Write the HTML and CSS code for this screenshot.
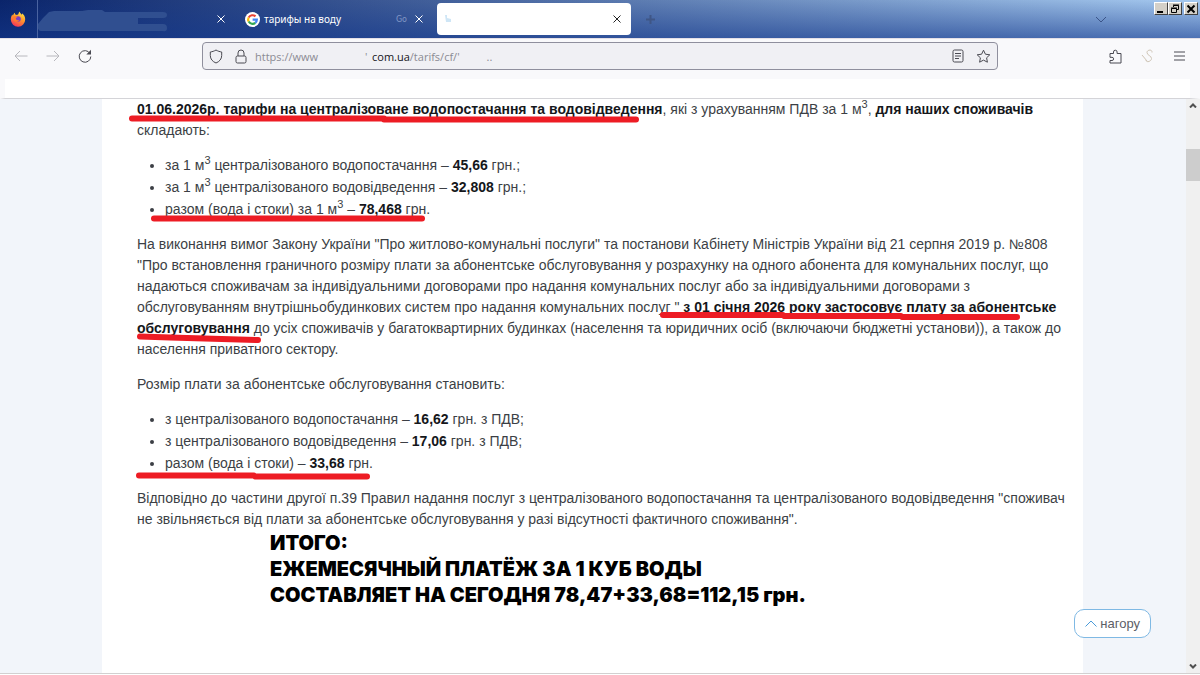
FILE: index.html
```html
<!DOCTYPE html>
<html lang="uk">

<head>
    <meta charset="UTF-8">
    <meta name="viewport" content="width=device-width, initial-scale=1.0">
    <title>Тарифи</title>
    <link rel="stylesheet" href="styles.css">
</head>

<body>
    <header class="tabs">
        <button class="home" aria-label="Firefox">
            <svg width="16" height="16" viewBox="0 0 16 16">
                <defs>
                    <linearGradient id="fox" x1="0.8" y1="0" x2="0.3" y2="1">
                        <stop offset="0" stop-color="#fff04a"/>
                        <stop offset="0.45" stop-color="#ff9a2a"/>
                        <stop offset="1" stop-color="#f5315c"/>
                    </linearGradient>
                </defs>
                <path fill="url(#fox)" d="M9.600.600c.3 1.500 1.300 2.200 2.300 3.100.3-.4.300-1 .1-1.500 2 1.300 3.200 3.600 3.200 6.100A7.200 7.200 0 0 1 .8 8.600c0-2 .6-3.800 1.600-5.200.1.5.3.9.6 1.200C3.300 3.300 4 2.400 4.800 1.800c0 .9.400 1.600 1.200 2.100 1.100-.1 1.800-.2 2.300-.7C8.600 2.300 8.900 1.300 9.600.6z"/>
                <circle cx="8" cy="8" r="2.800" fill="#7b3fc4"/>
                <path fill="#ff7a2d" d="M3.300 5.600c1.600-.8 3.200-.5 4.500.5-1 .2-1.300.8-2 1.200.1 1.600 1.700 2.400 3.600 1.600-.8 1.900-3.500 2.600-5.200.8-.9-1-1.300-2.500-.9-4.100z"/>
            </svg>
        </button>
        <div class="tab first">
            <svg class="smudge" width="130" height="22" viewBox="0 0 130 22">
                <path fill="#304f90" d="M0 14 5 8 11 2l5-1h28l6-1h14l3 2h58q4 0 4 3t-4 3h-25v6h25q4 0 4 4t-4 3H3q-4 0-3-7z"/>
            </svg>
            <button class="close" aria-label="Закрыть вкладку">
                <svg width="8" height="8" viewBox="0 0 8 8"><path d="M.5.5l7 7m0-7l-7 7"/></svg>
            </button>
        </div>
        <div class="tab second">
            <svg width="15" height="15" viewBox="0 0 24 24">
                <circle cx="12" cy="12" r="12" fill="#fff"/>
                <g fill="none" stroke-width="3.400">
                    <path stroke="#ea4335" d="M5.900 8.800A7 7 0 0 1 16.800 7"/>
                    <path stroke="#fbbc05" d="M5.900 15.300a7 7 0 0 1 0-6.600"/>
                    <path stroke="#34a853" d="M16.500 17.400A7 7 0 0 1 5.900 15.200"/>
                    <path stroke="#4285f4" d="M12.200 12.200H19a7 7 0 0 1-2.600 5.300"/>
                </g>
            </svg>
            <span class="title">тарифы на воду</span>
            <span class="faded">Go</span>
            <button class="close" aria-label="Закрыть вкладку">
                <svg width="8" height="8" viewBox="0 0 8 8"><path d="M.5.5l7 7m0-7l-7 7"/></svg>
            </button>
        </div>
        <div class="tab active">
            <svg width="7" height="8" viewBox="0 0 7 8"><path fill="#cfe6f6" d="M0 0h2v3l4 1v3H1z"/></svg>
            <button class="close" aria-label="Закрыть вкладку">
                <svg width="8" height="8" viewBox="0 0 8 8"><path d="M.5.5l7 7m0-7l-7 7"/></svg>
            </button>
        </div>
        <button class="new-tab" aria-label="Новая вкладка">
            <svg width="11" height="11" viewBox="0 0 11 11"><path d="M5.500 1v9M1 5.500h9"/></svg>
        </button>
        <button class="all-tabs" aria-label="Список вкладок">
            <svg width="12" height="7" viewBox="0 0 12 7"><path d="M1 1l5 5 5-5"/></svg>
        </button>
        <div class="window-buttons">
            <button aria-label="Свернуть"><svg width="12" height="10" viewBox="0 0 12 10"><path d="M2 8h6" stroke-width="2"/></svg></button>
            <button aria-label="Восстановить"><svg width="12" height="10" viewBox="0 0 12 10"><path d="M4.500 3V1.500h5v4H8M4 1h6M2.500 4.500h5v4h-5zM2 4h6"/></svg></button>
            <button class="quit" aria-label="Закрыть"><svg width="12" height="10" viewBox="0 0 12 10"><path d="M2.500 1.500l7 7m0-7l-7 7" stroke-width="2"/></svg></button>
        </div>
    </header>

    <nav class="toolbar">
        <div class="history">
            <button class="off" aria-label="Назад"><svg width="14" height="12" viewBox="0 0 14 12"><path d="M13.500 6H1M6 1L1 6l5 5"/></svg></button>
            <button class="off" aria-label="Вперёд"><svg width="14" height="12" viewBox="0 0 14 12"><path d="M.5 6H13M8 1l5 5-5 5"/></svg></button>
            <button aria-label="Обновить"><svg width="14" height="14" viewBox="0 0 14 14"><path d="M12 4.500A5.800 5.800 0 1 0 12.800 7.500"/><path d="M13 .8v4.700H8.300z" fill="#4a4a52" stroke="none"/></svg></button>
        </div>
        <div class="urlbar">
            <svg width="14" height="15" viewBox="0 0 14 15"><path d="M7 1c2 1.200 3.700 1.700 5.700 2v3.500C12.700 10 10.500 12.600 7 14 3.500 12.600 1.300 10 1.300 6.500V3C3.300 2.700 5 2.200 7 1z"/></svg>
            <svg width="12" height="15" viewBox="0 0 12 15"><path d="M3 7V4a3 3 0 0 1 6 0v3M2.500 7h7q1.500 0 1.500 1.500v4q0 1.500-1.500 1.500h-7Q1 14 1 12.500v-4Q1 7 2.500 7z"/></svg>
            <a class="address" href="#"><span class="scheme">https://www</span><span class="tick">'</span><span><b>com.ua</b>/tarifs/cf/'</span><span class="dots">..</span></a>
            <svg width="12" height="14" viewBox="0 0 12 14"><rect x="1" y="1" width="10" height="12" rx="1.500"/><path d="M3 4.500h6M3 7h6M3 9.500h4"/></svg>
            <svg width="15" height="15" viewBox="0 0 15 15"><path d="M7.500 1.200l1.900 4 4.400.6-3.200 3 .8 4.400-3.900-2.100-3.900 2.100.8-4.400-3.200-3 4.400-.6z"/></svg>
        </div>
        <div class="tools">
            <button aria-label="Расширения"><svg width="13" height="15" viewBox="0 0 13 15"><path d="M1 6.500V4.500h3.500V3a1.800 1.800 0 0 1 3.600 0v1.500H12V14H1v-2.500h2a1.500 1.500 0 0 0 0-3.200H1z"/></svg></button>
            <button class="script" aria-label="S"><svg width="12" height="14" viewBox="0 0 12 14"><path d="M11 3.500C11.500 0 6 .5 6 3.500c0 3 4.500 3 4.500 6S5 14 5 11M1 6l5 6"/></svg></button>
            <button aria-label="Меню"><svg width="11" height="10" viewBox="0 0 11 10"><path d="M0 1h11M0 5h11M0 9h11"/></svg></button>
        </div>
    </nav>
    <div class="bookmarks"></div>

    <div class="viewport">
        <main class="page">
            <article class="content">
                <p><b>01.06.2026р. тарифи на централізоване водопостачання та водовідведення</b>, які з урахуванням ПДВ за 1 м<sup>3</sup>, <b>для наших споживачів</b><br>
                    складають:</p>
                <ul>
                    <li>за 1 м<sup>3</sup> централізованого водопостачання – <b>45,66</b> грн.;</li>
                    <li>за 1 м<sup>3</sup> централізованого водовідведення – <b>32,808</b> грн.;</li>
                    <li>разом (вода і стоки) за 1 м<sup>3</sup> – <b>78,468</b> грн.</li>
                </ul>
                <p>На виконання вимог Закону України "Про житлово-комунальні послуги" та постанови Кабінету Міністрів України від 21 серпня 2019 р. №808<br>
                    "Про встановлення граничного розміру плати за абонентське обслуговування у розрахунку на одного абонента для комунальних послуг, що<br>
                    надаються споживачам за індивідуальними договорами про надання комунальних послуг або за індивідуальними договорами з<br>
                    обслуговуванням внутрішньобудинкових систем про надання комунальних послуг " <b>з 01 січня 2026 року застосовує плату за абонентське<br>
                    обслуговування</b> до усіх споживачів у багатоквартирних будинках (населення та юридичних осіб (включаючи бюджетні установи)), а також до<br>
                    населення приватного сектору.</p>
                <p>Розмір плати за абонентське обслуговування становить:</p>
                <ul>
                    <li>з централізованого водопостачання – <b>16,62</b> грн. з ПДВ;</li>
                    <li>з централізованого водовідведення – <b>17,06</b> грн. з ПДВ;</li>
                    <li>разом (вода і стоки) – <b>33,68</b> грн.</li>
                </ul>
                <p class="last">Відповідно до частини другої п.39 Правил надання послуг з централізованого водопостачання та централізованого водовідведення "споживач<br>
                    не звільняється від плати за абонентське обслуговування у разі відсутності фактичного споживання".</p>
                <div class="total" lang="ru">ИТОГО:<br>ЕЖЕМЕСЯЧНЫЙ ПЛАТЁЖ ЗА 1 КУБ ВОДЫ<br>СОСТАВЛЯЕТ НА СЕГОДНЯ 78,47+33,68=112,15 грн.</div>
                <!-- red pen marks over the text -->
                <svg class="marks" width="980" height="400" viewBox="0 0 980 400">
                    <path d="M30 19.500h252v1h252"/>
                    <path d="M52 119.500h268"/>
                    <path d="M561 216h120l1 1h117l1 1h115"/>
                    <path d="M38 237.500l30 1 88 2.500"/>
                    <path d="M37 376.500h115l1 1h112"/>
                </svg>
            </article>
        </main>
        <div class="scrollbar">
            <svg width="8" height="5" viewBox="0 0 8 5"><path d="M1 4.500l3-3 3 3"/></svg>
            <div class="thumb"></div>
            <svg width="8" height="5" viewBox="0 0 8 5"><path d="M1 .5l3 3 3-3"/></svg>
        </div>
        <a class="to-top" href="#">
            <svg width="12" height="7" viewBox="0 0 12 7"><path d="M.5 6.500L6 1l5.500 5.500"/></svg>
            нагору
        </a>
    </div>
</body>

</html>
```
FILE: styles.css
```css
* {
    box-sizing: border-box;
}

body {
    min-height: 100vh;
    display: flex;
    flex-direction: column;
    margin: 0;
    padding-bottom: 1px;
    background: #fff;
    font-family: 'Liberation Sans', Arial, sans-serif;
    font-size: 14px;
    color: #3c3f45;
}

button {
    display: flex;
    align-items: center;
    justify-content: center;
    border: none;
    background: none;
    padding: 0;
    color: inherit;
}

svg {
    display: block;
    flex: none;
    fill: none;
    stroke: currentColor;
}

/* tab strip */

.tabs {
    display: flex;
    height: 38px;
    color: #fff;
    background:
        linear-gradient(to bottom, rgba(20, 56, 140, 0) 0%, rgba(20, 56, 140, 0.6) 100%),
        linear-gradient(to right, #0a246a, #a6caf0);
}

.home {
    width: 38px;
    padding-right: 2px;
    border-right: 1px solid #4a63a0;
}

.home svg,
.second > svg {
    stroke: none;
}

.tab {
    display: flex;
    align-items: center;
    font-family: 'DejaVu Sans', sans-serif;
    font-size: 10px;
}

.smudge {
    margin-top: 4px;
    stroke: none;
}

.close {
    width: 24px;
    height: 24px;
}

.first {
    width: 195px;
    justify-content: space-between;
}

.second {
    width: 198px;
    padding-left: 12px;
}

.title {
    flex: 1;
    padding-left: 4px;
    font-family: 'Noto Sans', sans-serif;
    font-size: 10px;
}

.faded {
    color: #8298c6;
    font-size: 8px;
}

.active {
    width: 194px;
    height: 32px;
    margin: 3px 0 0 6px;
    padding: 0 2px 0 8px;
    justify-content: space-between;
    border-radius: 4px;
    background: #fff;
    color: #222;
}

.active > svg {
    stroke: none;
}

.new-tab {
    width: 38px;
    color: #3f5686;
    stroke-width: 2px;
}

.all-tabs {
    width: 24px;
    margin-left: auto;
    margin-right: 41px;
    color: #3b5488;
}

.window-buttons {
    display: flex;
    padding: 2px 2px 0 0;
}

.window-buttons button {
    width: 14px;
    height: 13px;
    background: #d4d0c8;
    color: #000;
    border: 1px solid;
    border-color: #fff #404040 #404040 #fff;
}

.window-buttons .quit {
    margin-left: 2px;
}

/* toolbar */

.toolbar {
    display: flex;
    align-items: center;
    height: 41px;
    padding-bottom: 6px;
    background: #f9f9fb;
    border-top: 1px solid #e4dfe6;
    color: #4a4a52;
}

.history {
    display: flex;
    width: 202px;
    padding-left: 5px;
}

.history button,
.tools button {
    width: 32px;
    height: 32px;
}

.history .off {
    color: #b8b8bd;
}

.urlbar {
    flex: 1;
    display: flex;
    align-items: center;
    gap: 12px;
    height: 28px;
    padding: 0 6px;
    background: #f0f0f4;
    border: 1px solid #8f8f9d;
    border-radius: 4px;
}

.address {
    flex: 1;
    display: flex;
    align-items: center;
    margin-left: -4px;
    font-family: 'Open Sans', sans-serif;
    font-size: 11px;
    color: #8b8b93;
    text-decoration: none;
}

.address b {
    font-weight: 400;
    color: #15141a;
}

.scheme {
    width: 110px;
}

.tick {
    width: 7px;
}

.dots {
    margin-left: 27px;
}

.tools {
    display: flex;
    width: 202px;
    justify-content: flex-end;
    padding-right: 5px;
}

.script {
    color: #cfc5b6;
}

.bookmarks {
    height: 20px;
    background: #fff;
    border-bottom: 1px solid #d4d4d8;
    border-left: 5px solid #f9f9fb;
    border-right: 10px solid #f9f9fb;
}

/* page */

.viewport {
    flex: 1;
    display: flex;
    position: relative;
    background: #f2f5fa;
    border-bottom: 1px solid #d2d0d0;
}

.page {
    flex: 1;
    min-width: 0;
    padding: 0 103px 0 102px;
}

.content {
    position: relative;
    height: 100%;
    padding: 0 35px;
    background: #fff;
    line-height: 21px;
    white-space: nowrap;
}

.content p {
    margin: 0 0 14px;
}

.content b {
    color: #15171b;
}

.content ul {
    display: grid;
    gap: 1px;
    margin: 0 0 14px;
    padding-left: 28px;
}

.content sup {
    font-size: 11px;
    line-height: 0;
}

.content .last {
    margin-bottom: 0;
}

.total {
    padding-left: 133px;
    font-family: Inter, sans-serif;
    font-size: 20px;
    font-weight: 900;
    line-height: 26px;
    color: #000;
}

.marks {
    position: absolute;
    left: 0;
    top: 0;
    stroke: #ed1c24;
    stroke-width: 6px;
    stroke-linecap: round;
    stroke-linejoin: round;
}

.scrollbar {
    display: flex;
    flex-direction: column;
    align-items: center;
    width: 14px;
    padding: 4px 0;
    background: #f0f0f0;
    color: #505050;
    stroke-width: 2px;
}

.thumb {
    width: 14px;
    height: 32px;
    margin: 41px 0 auto;
    background: #cdcdcd;
}

.to-top {
    position: absolute;
    right: 49px;
    bottom: 35px;
    display: flex;
    align-items: center;
    gap: 3px;
    height: 29px;
    padding: 0 10px;
    border: 1px solid #7fb9e4;
    border-radius: 10px;
    background: #fff;
    color: #5c6066;
    font-size: 13px;
    text-decoration: none;
}

.to-top svg {
    color: #4a9bd9;
}
```
